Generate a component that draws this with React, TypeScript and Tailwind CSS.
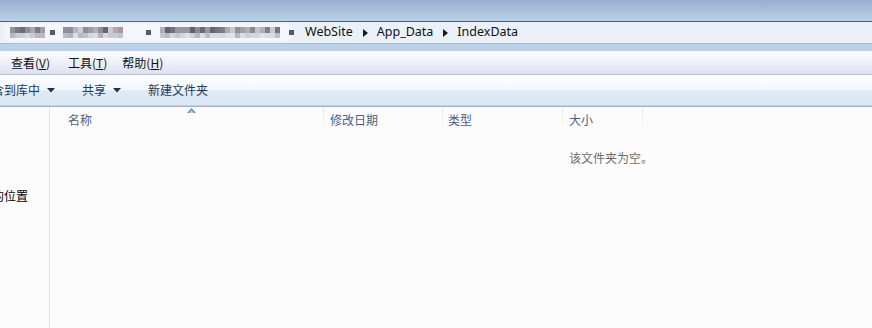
import React from "react";

const cn = '"Noto Sans CJK SC", "Noto Sans", sans-serif';

function Mosaic({ x, count, seed }: { x: number; count: number; seed: number }) {
  const blocks = [];
  let s = seed;
  const rnd = () => {
    s = (s * 9301 + 49297) % 233280;
    return s / 233280;
  };
  for (let i = 0; i < count; i++) {
    const v = rnd();
    const g = Math.round(95 + v * 110);
    const tint = rnd();
    const r = g + (tint > 0.8 ? 15 : 0);
    const b = g + (tint < 0.3 ? 20 : 5);
    const g2 = Math.round(175 + rnd() * 50);
    blocks.push(
      <div key={i} className="flex flex-col">
        <div style={{ width: 5, height: 6, background: `rgb(${r},${g},${b})` }} />
        <div style={{ width: 5, height: 5, background: `rgb(${g2},${g2 + 4},${g2 + 10})` }} />
      </div>
    );
  }
  return (
    <div className="absolute top-[5px] flex blur-[0.4px]" style={{ left: x }}>
      {blocks}
    </div>
  );
}

function Arrow() {
  return (
    <svg width="5" height="8" viewBox="0 0 5 8" className="ml-[10px] mr-[9px]">
      <path d="M0 0 L5 4 L0 8 Z" fill="#1a1a1a" />
    </svg>
  );
}

function Drop() {
  return (
    <svg width="8" height="5" viewBox="0 0 8 5" className="ml-[7px]">
      <path d="M0 0 L8 0 L4 4.5 Z" fill="#1e3050" />
    </svg>
  );
}

export default function App() {
  return (
    <div className="w-[872px] h-[328px] overflow-hidden flex flex-col bg-[#fcfcfc] relative" style={{ fontFamily: cn }}>
      {/* title area */}
      <div className="h-[21px] bg-gradient-to-b from-[#97b0cd] to-[#b9d0e9]" />
      <div className="h-px bg-[#4f5a66]" />
      {/* address bar */}
      <div className="h-[21px] bg-[#eaf1f9] relative flex items-center text-[12.5px] text-[#111]" style={{ fontFamily: '"Noto Sans", sans-serif' }}>
        <div className="absolute left-[4px] top-[1px] w-[288px] h-[19px] rounded-[8px] bg-[#f3f6fa] blur-[1px]" />
        <Mosaic x={10} count={7} seed={7} />
        <div className="absolute left-[50px] top-[8px] w-[5px] h-[5px] bg-[#555a60] blur-[0.4px]" />
        <Mosaic x={63} count={12} seed={31} />
        <div className="absolute left-[146px] top-[8px] w-[5px] h-[5px] bg-[#555a60] blur-[0.4px]" />
        <Mosaic x={160} count={24} seed={113} />
        <div className="absolute left-[289px] top-[8px] w-[5px] h-[5px] bg-[#555a60]" />
        <div className="relative ml-[305px] flex items-center">
          <span>WebSite</span>
          <Arrow />
          <span>App_Data</span>
          <Arrow />
          <span>IndexData</span>
        </div>
      </div>
      <div className="h-px bg-[#aeb8c5]" />
      <div className="h-[7px] bg-[#bad1ea]" />
      <div className="h-px bg-[#f4f7fb]" />
      {/* menu bar */}
      <div className="h-[22px] bg-gradient-to-b from-[#fbfcfe] via-[#eceff8] to-[#dde1f1] flex items-center text-[12px] text-[#111]">
        <span className="ml-[11px]">查看(<span className="underline">V</span>)</span>
        <span className="ml-[18px]">工具(<span className="underline">T</span>)</span>
        <span className="ml-[15px]">帮助(<span className="underline">H</span>)</span>
      </div>
      <div className="h-px bg-[#b7bdc9]" />
      {/* toolbar */}
      <div className="h-[30px] flex flex-col relative">
        <div className="h-[15px] bg-gradient-to-b from-[#fbfdff] to-[#f2f8fe]" />
        <div className="h-[15px] bg-gradient-to-b from-[#e1ebf7] to-[#dbe6f4]" />
        <div className="absolute inset-0 flex items-center text-[12px] text-[#1e395b]">
          <span className="ml-[-8px]">含到库中</span>
          <Drop />
          <span className="ml-[27px]">共享</span>
          <Drop />
          <span className="ml-[27px]">新建文件夹</span>
        </div>
      </div>
      <div className="h-px bg-[#c6d2e2]" />
      <div className="h-px bg-[#a2b1c8]" />
      {/* content */}
      <div className="flex-1 flex">
        <div className="w-[50px] border-r border-[#d6e4f3] relative">
          <div className="absolute top-[80px] left-[-8px] text-[12px] text-black whitespace-nowrap">的位置</div>
        </div>
        <div className="flex-1 relative">
          <div className="flex h-[24px] text-[12px] text-[#4d6185]">
            <div className="w-[273px] pl-[18px] pt-[4px] relative">
              名称
              <svg width="9" height="5" viewBox="0 0 9 5" className="absolute left-[137px] top-[1px]">
                <path d="M0 5 L4.5 0 L9 5 Z" fill="#5c8fc4" />
                <path d="M2 5 L4.5 2 L7 5 Z" fill="#a9cdef" />
              </svg>
            </div>
            <div className="w-px bg-gradient-to-b from-[#dfe6f0] to-transparent" />
            <div className="w-[118px] pl-[6px] pt-[4px]">修改日期</div>
            <div className="w-px bg-gradient-to-b from-[#dfe6f0] to-transparent" />
            <div className="w-[119px] pl-[5px] pt-[4px]">类型</div>
            <div className="w-px bg-gradient-to-b from-[#dfe6f0] to-transparent" />
            <div className="w-[79px] pl-[6px] pt-[4px]">大小</div>
            <div className="w-px bg-gradient-to-b from-[#dfe6f0] to-transparent" />
          </div>
          <div className="ml-[519px] mt-[18px] text-[12px] text-[#6d6d6d] whitespace-nowrap">该文件夹为空。</div>
        </div>
      </div>
    </div>
  );
}
